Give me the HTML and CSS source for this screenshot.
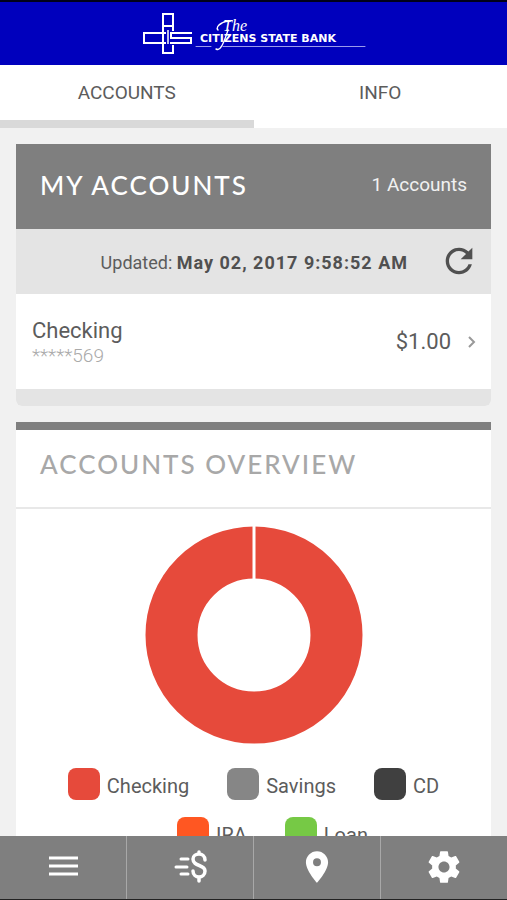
FILE: index.html
```html
<!DOCTYPE html>
<html lang="en">
<head>
<meta charset="utf-8">
<meta name="viewport" content="width=device-width, initial-scale=1">
<title>The Citizens State Bank</title>
<link rel="stylesheet" href="styles.css">
</head>
<body>
<header class="brand">
  <svg class="logo" width="226" height="48" viewBox="0 0 226 48" role="img" aria-label="The Citizens State Bank">
    <g fill="none" stroke="#fff" stroke-width="2">
      <path d="M22 42V3h10v17M22 15h10M21 42h11v-8"/>
      <path d="M25 22H3v10h22"/>
      <path d="M27 19v14" stroke-width="1.500"/>
      <path d="M51 22H30v5h20v5H29"/>
    </g>
    <g fill="none" stroke="#fff" stroke-linecap="round">
      <path stroke-width="1.400" d="M77 19c-2-2 0-5 4-7 3-2 6-2 9-2"/>
      <path stroke-width="1.400" d="M87 19c-2 6-4 13-7 17-1 2-3 3-5 2"/>
      <path stroke="#9a9aec" stroke-width="1" d="M55 35.500h15M82 35.500h142"/>
    </g>
    <text class="logo-script" x="82" y="20">The</text>
    <text class="logo-name" x="59" y="31">CITIZENS STATE BANK</text>
  </svg>
</header>
<nav class="tabs" aria-label="Sections">
  <a class="tab tab-active" href="#accounts" aria-current="page">ACCOUNTS</a>
  <a class="tab" href="#info">INFO</a>
</nav>
<main class="content">
  <section class="card" id="accounts">
    <header class="card-head">
      <h1 class="title">MY ACCOUNTS</h1>
      <span class="count">1 Accounts</span>
    </header>
    <div class="updated">
      <p class="updated-text">Updated: <strong>May 02, 2017 9:58:52 AM</strong></p>
      <button class="refresh" type="button" aria-label="Refresh">
        <svg width="40" height="40" viewBox="0 0 24 24"><path fill="#505050" d="M17.650 6.350C16.200 4.900 14.210 4 12 4c-4.420 0-7.990 3.580-7.990 8s3.570 8 7.990 8c3.730 0 6.840-2.550 7.730-6h-2.080c-.820 2.330-3.040 4-5.650 4-3.310 0-6-2.690-6-6s2.690-6 6-6c1.660 0 3.140.690 4.220 1.780L13 11h7V4l-2.350 2.350z"/></svg>
      </button>
    </div>
    <a class="account" href="#checking">
      <span class="account-id">
        <span class="account-name">Checking</span>
        <span class="account-number">*****569</span>
      </span>
      <span class="amount">$1.00</span>
      <svg width="8" height="12" viewBox="0 0 8 12"><path fill="none" stroke="#999" stroke-width="2" d="M1 1l5 5-5 5"/></svg>
    </a>
    <div class="card-foot"></div>
  </section>

  <section class="card overview">
    <h2 class="title overview-title">ACCOUNTS OVERVIEW</h2>
    <svg class="donut" width="218" height="218" viewBox="0 0 218 218" role="img" aria-label="Checking 100%">
      <circle cx="109" cy="109" r="82.500" fill="none" stroke="#e64a3b" stroke-width="52"/>
      <path stroke="#fff" stroke-width="3" d="M109 0v54"/>
    </svg>
    <ul class="legend">
      <li><i class="swatch checking"></i><span>Checking</span></li>
      <li><i class="swatch savings"></i><span>Savings</span></li>
      <li><i class="swatch cd"></i><span>CD</span></li>
      <li class="indent"><i class="swatch ira"></i><span>IRA</span></li>
      <li><i class="swatch loan"></i><span>Loan</span></li>
    </ul>
  </section>
</main>
<nav class="toolbar" aria-label="Main">
  <button type="button" aria-label="Menu">
    <svg width="40" height="40" viewBox="0 0 40 40"><path stroke="#fff" stroke-width="3" d="M6 11h29M6 19h29M6 27h29"/></svg>
  </button>
  <button type="button" aria-label="Transfers">
    <svg width="40" height="40" viewBox="0 0 40 40"><g fill="none" stroke="#fff" stroke-width="3" stroke-linecap="round"><path d="M11 12h7M6 20h11M11 27h7"/><path stroke-width="3.500" d="M35 13c0-4-3-6-6-6s-6 2-6 5c0 8 12 5 12 12 0 4-3 6-6 6s-6-2-6-6M29 5v2M29 30v4"/></g></svg>
  </button>
  <button type="button" aria-label="Locations">
    <svg width="38" height="38" viewBox="0 0 24 24"><path fill="#fff" d="M12 2C8.130 2 5 5.130 5 9c0 5.250 7 13 7 13s7-7.750 7-13c0-3.870-3.130-7-7-7zm0 9.500a2.500 2.500 0 1 1 0-5 2.500 2.500 0 0 1 0 5z"/></svg>
  </button>
  <button type="button" aria-label="Settings">
    <svg width="38" height="38" viewBox="0 0 24 24"><path fill="#fff" d="M19.430 12.980c.040-.320.070-.640.070-.980s-.030-.660-.070-.980l2.110-1.650c.190-.150.240-.420.120-.640l-2-3.460c-.120-.220-.390-.300-.610-.220l-2.490 1c-.520-.400-1.080-.730-1.690-.980l-.380-2.650C14.460 2.180 14.250 2 14 2h-4c-.250 0-.460.180-.490.420l-.380 2.650c-.610.250-1.170.590-1.690.980l-2.490-1c-.230-.090-.490 0-.610.220l-2 3.460c-.130.220-.070.490.120.640l2.110 1.650c-.040.320-.070.650-.070.980s.030.660.070.980l-2.110 1.650c-.190.150-.240.420-.120.640l2 3.460c.120.220.390.300.610.220l2.490-1c.520.400 1.080.730 1.690.980l.380 2.650c.030.240.240.420.490.420h4c.250 0 .460-.180.490-.420l.380-2.650c.610-.250 1.170-.590 1.690-.980l2.490 1c.230.090.490 0 .610-.220l2-3.460c.120-.220.070-.490-.120-.640l-2.110-1.650zM12 15.500c-1.930 0-3.500-1.570-3.500-3.500s1.570-3.500 3.500-3.500 3.500 1.570 3.500 3.500-1.570 3.500-3.500 3.500z"/></svg>
  </button>
</nav>
</body>
</html>
```
FILE: styles.css
```css
* {
  box-sizing: border-box;
}

body {
  display: flex;
  flex-direction: column;
  height: 100vh;
  margin: 0;
  background: #f1f1f1;
  color: #5c5c5c;
  font-family: Roboto, "Liberation Sans", sans-serif;
  font-size: 19px;
}

a {
  color: inherit;
  text-decoration: none;
}

button {
  display: flex;
  align-items: center;
  justify-content: center;
  padding: 0;
  border: 0;
  background: none;
}

.brand {
  display: flex;
  flex: none;
  justify-content: center;
  padding: 9px 0 6px;
  border-top: 2px solid #000018;
  background: #0000bd;
}

.logo {
  display: block;
}

.logo-script {
  fill: #fff;
  font: italic 16px "Liberation Serif", serif;
}

.logo-name {
  fill: #fff;
  font: bold 11px "DejaVu Sans", sans-serif;
}

.tabs {
  display: flex;
  flex: none;
  background: #fff;
}

.tab {
  flex: 1;
  height: 63px;
  border-bottom: 8px solid transparent;
  line-height: 56px;
  text-align: center;
}

.tab-active {
  border-color: #d9d9d9;
}

.content {
  display: flex;
  flex: 1;
  flex-direction: column;
  gap: 16px;
  min-height: 0;
  padding: 16px;
  overflow-y: auto;
  scrollbar-width: none;
}

.card {
  flex: none;
  background: #fff;
}

#accounts {
  border-radius: 0 0 6px 6px;
  overflow: hidden;
}

.card-head {
  display: flex;
  align-items: center;
  justify-content: space-between;
  height: 85px;
  padding: 0 24px 4px;
  background: #7f7f7f;
  color: #fff;
}

.title {
  margin: 0;
  font-family: Lato, sans-serif;
  font-size: 26px;
  font-weight: 500;
  letter-spacing: 2px;
}

.count {
  color: #f1f1f1;
}

.updated {
  display: flex;
  align-items: center;
  justify-content: flex-end;
  gap: 31px;
  height: 65px;
  padding: 0 12px 2px 0;
  background: #e4e4e4;
}

.updated-text {
  margin: 0;
  padding-top: 4px;
  font-size: 18px;
}

.updated-text strong {
  color: #505050;
  letter-spacing: 1px;
}

.account {
  display: flex;
  align-items: center;
  gap: 17px;
  height: 95px;
  padding: 0 15px 0 16px;
  font-size: 22px;
}

.account-id {
  display: flex;
  flex: 1;
  flex-direction: column;
  padding-top: 2px;
}

.account-name {
  line-height: 26px;
}

.account-number {
  color: #aaa;
  font-size: 19px;
  font-weight: 300;
  line-height: 24px;
}

.card-foot {
  height: 17px;
  background: #e4e4e4;
}

.overview {
  border-top: 8px solid #7f7f7f;
}

.overview-title {
  padding: 18px 24px 27px;
  border-bottom: 2px solid #e8e8e8;
  color: #a8a8a8;
  line-height: 32px;
}

.donut {
  display: block;
  margin: 17px auto 24px;
}

.legend {
  display: flex;
  flex-wrap: wrap;
  justify-content: center;
  gap: 17px 38px;
  margin: 0;
  padding: 0 24px 24px;
  list-style: none;
  font-size: 20px;
}

.legend li {
  display: flex;
  align-items: center;
  gap: 7px;
  height: 32px;
}

.legend .indent {
  margin-left: 38px;
}

.legend span {
  padding-top: 4px;
}

.swatch {
  width: 32px;
  height: 32px;
  border-radius: 8px;
}

.checking { background: #e64a3b; }
.savings { background: #868686; }
.cd { background: #404040; }
.ira { background: #ff5722; }
.loan { background: #76c945; }

.toolbar {
  display: flex;
  flex: none;
  height: 64px;
  border-bottom: 1px solid #222;
  background: #7f7f7f;
}

.toolbar button {
  flex: 1;
  padding-bottom: 2px;
}

.toolbar button + button {
  border-left: 1px solid #a8a8a8;
}
```
